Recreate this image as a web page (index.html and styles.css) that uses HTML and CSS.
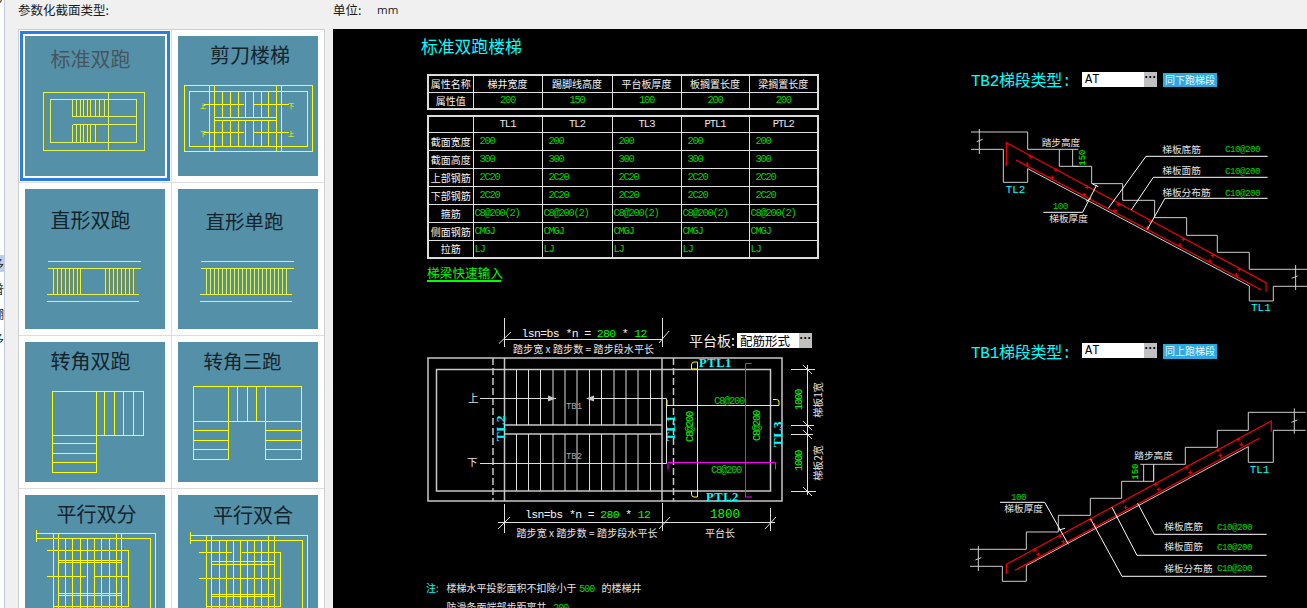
FILE: index.html
```html
<!DOCTYPE html>
<html lang="zh-CN">
<head>
<meta charset="utf-8">
<title>参数化截面类型</title>
<link rel="stylesheet" href="styles.css">
</head>
<body>
<div class="app">
  <aside class="tree">
    <div class="tree-item tree-first">号</div>
    <div class="tree-item tree-sel">多</div>
    <div class="tree-item">普</div>
    <div class="tree-item">翻</div>
    <div class="tree-item">多</div>
  </aside>
  <main class="panel">
    <header class="topbar">
      <span class="type-label">参数化截面类型:</span>
      <span class="unit-label">单位:</span>
      <span class="unit-value">mm</span>
    </header>
    <div class="body-row">
      <section class="gallery">
        <div class="cell cell-sel">
          <svg class="thumb" viewBox="0 0 140 140" width="140" height="140">
            <text class="thumb-title thumb-faded" x="25.5" y="31">标准双跑</text>
            <path class="ln halo" d="M18.5 56.5H119.5V114.5H18.5ZM25.5 63.5H111.5V106.5H25.5ZM83.5 56.5V114.5M47.5 63.5V80.5M51.5 63.5V80.5M55.5 63.5V80.5M58.5 63.5V80.5M62.5 63.5V80.5M65.5 63.5V80.5M70.5 63.5V80.5M74.5 63.5V80.5M79.5 63.5V80.5M47.5 80.5H111.5M47.5 88.5H111.5M47.5 88.5V106.5M51.5 88.5V106.5M55.5 88.5V106.5M58.5 88.5V106.5M62.5 88.5V106.5M65.5 88.5V106.5M70.5 88.5V106.5"/>
          </svg>
        </div>
        <div class="cell">
          <svg class="thumb" viewBox="0 0 140 140" width="140" height="140">
            <text class="thumb-title" x="32" y="27">剪刀楼梯</text>
            <path class="ln" d="M6.5 49.5H134.5V115.5H6.5ZM11.5 55.5H129.5V110.5H11.5ZM31.5 49.5V115.5M36.5 49.5V115.5M98.5 49.5V115.5M103.5 49.5V115.5M36.5 81.5H98.5M36.5 84.5H98.5M44.5 55.5V81.5M52.5 55.5V81.5M60.5 55.5V81.5M67.5 55.5V81.5M75.5 55.5V81.5M83.5 55.5V81.5M90.5 55.5V81.5M44.5 84.5V110.5M52.5 84.5V110.5M60.5 84.5V110.5M67.5 84.5V110.5M75.5 84.5V110.5M83.5 84.5V110.5M90.5 84.5V110.5M25.5 68.5H65.5M75.5 68.5H110.5M25.5 96.5H65.5M75.5 96.5H110.5"/>
            <text class="thumb-tiny" x="25" y="72">上</text>
            <text class="thumb-tiny" x="113" y="72">下</text>
            <text class="thumb-tiny" x="25" y="100">下</text>
            <text class="thumb-tiny" x="113" y="100">上</text>
          </svg>
        </div>
        <div class="cell">
          <svg class="thumb" viewBox="0 0 140 140" width="140" height="140">
            <text class="thumb-title" x="25.5" y="39">直形双跑</text>
            <path class="ln halo" d="M22.5 72.5H115.5M22.5 79.5H115.5M21.5 105.5H113.5M21.5 112.5H113.5M28.5 79.5V105.5M32.5 79.5V105.5M36.5 79.5V105.5M40.5 79.5V105.5M44.5 79.5V105.5M48.5 79.5V105.5M52.5 79.5V105.5M55.5 79.5V105.5M80.5 79.5V105.5M84.5 79.5V105.5M88.5 79.5V105.5M92.5 79.5V105.5M96.5 79.5V105.5M100.5 79.5V105.5M104.5 79.5V105.5M108.5 79.5V105.5"/>
          </svg>
        </div>
        <div class="cell">
          <svg class="thumb" viewBox="0 0 140 140" width="140" height="140">
            <text class="thumb-title thumb-sm" x="27.5" y="40">直形单跑</text>
            <path class="ln halo" d="M22.5 72.5H115.5M22.5 79.5H115.5M21.5 105.5H113.5M21.5 112.5H113.5M28.5 79.5V105.5M32.5 79.5V105.5M36.5 79.5V105.5M40.5 79.5V105.5M44.5 79.5V105.5M48.5 79.5V105.5M52.5 79.5V105.5M56.5 79.5V105.5M60.5 79.5V105.5M64.5 79.5V105.5M68.5 79.5V105.5M72.5 79.5V105.5M76.5 79.5V105.5M80.5 79.5V105.5M84.5 79.5V105.5M88.5 79.5V105.5M92.5 79.5V105.5M96.5 79.5V105.5M100.5 79.5V105.5M104.5 79.5V105.5M108.5 79.5V105.5"/>
          </svg>
        </div>
        <div class="cell">
          <svg class="thumb" viewBox="0 0 140 140" width="140" height="140">
            <text class="thumb-title" x="25.5" y="27">转角双跑</text>
            <path class="ln" d="M27.5 49.5H118.5V93.5H71.5V130.5H27.5ZM71.5 49.5V93.5M79.5 49.5V93.5M89.5 49.5V93.5M98.5 49.5V93.5M108.5 49.5V93.5M27.5 93.5H71.5M27.5 101.5H71.5M27.5 111.5H71.5M27.5 120.5H71.5"/>
          </svg>
        </div>
        <div class="cell">
          <svg class="thumb" viewBox="0 0 140 140" width="140" height="140">
            <text class="thumb-title thumb-sm" x="25.5" y="27">转角三跑</text>
            <path class="ln" d="M15.5 44.5H123.5V117.5H87.5V79.5H50.5V117.5H15.5ZM50.5 44.5V79.5M59.5 44.5V79.5M69.5 44.5V79.5M78.5 44.5V79.5M87.5 44.5V79.5M15.5 79.5H50.5M87.5 79.5H123.5M15.5 88.5H50.5M15.5 98.5H50.5M15.5 107.5H50.5M87.5 88.5H123.5M87.5 98.5H123.5M87.5 107.5H123.5"/>
          </svg>
        </div>
        <div class="cell">
          <svg class="thumb" viewBox="0 0 140 140" width="140" height="140">
            <text class="thumb-title" x="31.5" y="27">平行双分</text>
            <path class="ln" d="M11.5 38.5H130.5V140M11.5 43.5H125.5V140M11.5 35V47M28.5 38.5V140M33.5 38.5V140M91.5 38.5V140M96.5 38.5V140M21.5 55.5H103.5V111.5H28.5M33.5 65.5H95.5M33.5 67.5H95.5M21.5 81.5H60.5M69.5 81.5H103.5M33.5 98.5H95.5M33.5 100.5H95.5M40.5 43.5V140M47.5 43.5V140M55.5 43.5V140M62.5 43.5V140M69.5 43.5V140M76.5 43.5V140M84.5 43.5V140"/>
          </svg>
        </div>
        <div class="cell">
          <svg class="thumb" viewBox="0 0 140 140" width="140" height="140">
            <text class="thumb-title" x="35" y="28">平行双合</text>
            <path class="ln" d="M12.5 40.5H129.5V140M12.5 45.5H124.5V140M12.5 37V49M28.5 40.5V140M33.5 40.5V140M90.5 40.5V140M96.5 40.5V140M20.5 57.5H53.5M63.5 57.5H102.5V111.5H28.5M33.5 66.5H96.5M33.5 69.5H96.5M20.5 83.5H102.5M33.5 99.5H96.5M33.5 101.5H96.5M41.5 45.5V140M48.5 45.5V140M55.5 45.5V140M62.5 45.5V140M69.5 45.5V140M76.5 45.5V140M83.5 45.5V140"/>
          </svg>
        </div>
      </section>
      <section class="canvas">
        <svg class="drawing" viewBox="333 29 974 579" width="974" height="579">
          <text class="title" x="421" y="53">标准双跑楼梯</text>
          <text class="link" x="427" y="278" textLength="76">梯梁快速输入</text>
          <path class="link-rule" d="M427 281H501"/>

          <!-- stair plan -->
          <path class="wall" d="M428 358H782V501H428ZM436.5 369.5H770.5V491H436.5ZM504.5 358V501M662 358V501M504.5 425H662M504.5 434H662"/>
          <path class="wall-dash" d="M493 358V501M673.5 358V501"/>
          <path class="tread" d="M516.5 369.5V425M528.5 369.5V425M540.5 369.5V425M553 369.5V425M565 369.5V425M577 369.5V425M589.5 369.5V425M601.5 369.5V425M614 369.5V425M626 369.5V425M638 369.5V425M650.5 369.5V425M516.5 434V491M528.5 434V491M540.5 434V491M553 434V491M565 434V491M577 434V491M589.5 434V491M601.5 434V491M614 434V491M626 434V491M638 434V491M650.5 434V491M480 398.5H556M594 398.5H666.5V463.5H480"/>
          <path class="arrow" d="M548 395.500L556 398.500L548 401.500ZM594 395.500L586 398.500L594 401.500Z"/>
          <text class="lbl-12" x="468" y="402">上</text>
          <text class="lbl-12" x="467" y="466">下</text>
          <text class="tb" x="574" y="409">TB1</text>
          <text class="tb" x="574" y="459">TB2</text>
          <text class="tl-v" transform="rotate(-90 500 428)" x="500" y="428">TL2</text>
          <text class="tl-v" transform="rotate(-90 670 428)" x="670" y="428">TL1</text>
          <text class="tl-v" transform="rotate(-90 777 434)" x="777" y="434">TL3</text>
          <text class="ptl" x="699" y="367">PTL1</text>
          <text class="ptl" x="706" y="501">PTL2</text>
          <path class="rebar-y" d="M697.5 369H691.500V365Q691.500 362 694 362H697.500V497H694Q691.500 497 691.500 494V491M667 400V405.500H779V402Q779 399.500 776.500 399.500H773"/>
          <path class="rebar-m" d="M668 469.500V462.500H775.500V469.500M751.500 363.500H745.500V497H752"/>
          <text class="val" x="714" y="404">C8@200</text>
          <text class="val" x="711" y="473">C8@200</text>
          <text class="val-c" transform="rotate(-90 689.500 427)" x="689.500" y="427">C8@200</text>
          <text class="val-c" transform="rotate(-90 756.500 426)" x="756.500" y="426">C8@200</text>
          <path class="dim" d="M791 369.500H815M791 425.500H814M791 434.500H813M791 491.500H816M807.500 365V495M803 365L812 374M803 421L812 430M803 430L812 439M803 487L812 496"/>
          <text class="val-c" transform="rotate(-90 798.500 400)" x="798.500" y="400">1000</text>
          <text class="val-c" transform="rotate(-90 798.500 461)" x="798.500" y="461">1000</text>
          <text class="lbl-c" transform="rotate(-90 817 400)" x="817" y="400">梯板1宽</text>
          <text class="lbl-c" transform="rotate(-90 817 463)" x="817" y="463">梯板2宽</text>

          <path class="dim" d="M504.500 318V347M662.500 318V347M504.500 339.500H662.500M499 343.500L511 332M659 343L669 331M504.500 504V533M662.500 503V531M770.500 508V531M498 522.500H775M498 529L510 517M659 529L670 517M765 529L776 517"/>
          <text class="formula" x="521.500" y="337" textLength="126">lsn=bs *n = <tspan class="g">280</tspan> * <tspan class="g">12</tspan></text>
          <text class="lbl" x="513" y="353" textLength="141">踏步宽 x 踏步数 = 踏步段水平长</text>
          <text class="formula" x="525" y="518" textLength="126">lsn=bs *n = <tspan class="g">280</tspan> * <tspan class="g">12</tspan></text>
          <text class="lbl" x="516.500" y="537" textLength="141">踏步宽 x 踏步数 = 踏步段水平长</text>
          <text class="formula g" x="710" y="518">1800</text>
          <text class="lbl" x="705" y="537">平台长</text>
          <text class="lbl-14" x="689" y="345.500">平台板:</text>

          <text class="note-c" x="426" y="592">注:</text>
          <text class="lbl" x="446.500" y="592">楼梯水平投影面积不扣除小于</text>
          <text class="val-10" x="579" y="592">500</text>
          <text class="lbl" x="601.500" y="592">的楼梯井</text>
          <text class="lbl" x="446.500" y="611">防滑条面端部步距离共</text>
          <text class="val-10" x="553" y="611">200</text>

          <!-- TB2 section -->
          <g transform="translate(960 60) scale(.3333)">
            <text class="s-title" x="33" y="78" textLength="302">TB2梯段类型:</text>
            <path class="s-grey" d="M33 216H203V268H298V319H395V371H488V421H584V473H680V526H772V577H868V628H1041M33 268H130V367H203V326L868 678V723H940V679H1041M58 207V282M50 245L68 238M1007 615V690M995 655L1013 648M338 268V319H355M298 268H355"/>
            <path class="s-red" d="M139 318V248L918 668V695M168 300L905 690"/>
            <path class="s-red-x" d="M206 290h12M212 284v12M282 330h12M288 324v12M376 382h12M382 376v12M470 433h12M476 427v12M564 484h12M570 478v12M664 538h12M670 532v12M752 586h12M758 580v12M832 629h12M838 623v12M196 312h12M202 306v12M271 352h12M277 346v12M366 404h12M372 398v12M459 452h12M465 446v12M556 504h12M562 498v12M654 555h12M660 549v12M744 603h12M750 597v12M824 645h12M830 639v12"/>
            <path class="s-lead" d="M923 289H558L445 445M923 352H580L514 450M923 415H615L562 508M250 457H368L410 375M398 372L415 380M378 424L392 416"/>
            <text class="s-lbl" x="245" y="258">踏步高度</text>
            <text class="s-lbl" x="607" y="278">梯板底筋</text>
            <text class="s-lbl" x="607" y="342">梯板面筋</text>
            <text class="s-lbl" x="607" y="408">梯板分布筋</text>
            <text class="s-lbl" x="268" y="487">梯板厚度</text>
            <text class="s-val" x="795" y="275">C10@200</text>
            <text class="s-val" x="795" y="341">C10@200</text>
            <text class="s-val" x="795" y="407">C10@200</text>
            <text class="s-val" x="278" y="446">100</text>
            <text class="s-val-b" transform="rotate(-90 368 293)" x="368" y="293">150</text>
            <text class="s-tl" x="137" y="400">TL2</text>
            <text class="s-tl" x="873" y="754">TL1</text>
          </g>

          <!-- TB1 section -->
          <g transform="translate(960 335) scale(.3333)">
            <text class="s-title" x="33" y="68" textLength="302">TB1梯段类型:</text>
            <path class="s-grey" d="M30 643H199V591H295V541H391V490H485V439H581V388H676V337H772V286H865V232H1037M30 694H127V739H199V692L865 335V382H940V286H1037M55 633V708M46 675L64 668M1003 220V296M994 262L1012 255M581 388V439M551 388V439M541 388H581"/>
            <path class="s-red" d="M139 717V688L934 258V290M165 706L898 310"/>
            <path class="s-red-x" d="M219 645h12M225 639v12M294 604h12M300 598v12M386 553h12M392 547v12M484 500h12M490 494v12M581 448h12M587 442v12M674 397h12M680 391v12M768 346h12M774 340v12M829 313h12M835 307v12M229 658h12M235 652v12M304 620h12M310 614v12M397 570h12M403 564v12M491 517h12M497 511v12M590 463h12M596 457v12M685 412h12M691 406v12M775 361h12M781 355v12M838 328h12M844 322v12"/>
            <path class="s-lead" d="M920 598H583L533 505M920 661H531L456 517M920 724H486L392 552M120 502H254L325 628M297 585L315 580"/>
            <text class="s-lbl" x="523" y="371">踏步高度</text>
            <text class="s-lbl" x="613" y="585">梯板底筋</text>
            <text class="s-lbl" x="613" y="646">梯板面筋</text>
            <text class="s-lbl" x="613" y="711">梯板分布筋</text>
            <text class="s-lbl" x="133" y="531">梯板厚度</text>
            <text class="s-val" x="771" y="584">C10@200</text>
            <text class="s-val" x="771" y="646">C10@200</text>
            <text class="s-val" x="771" y="709">C10@200</text>
            <text class="s-val" x="153" y="495">100</text>
            <text class="s-val-b" transform="rotate(-90 528 410)" x="528" y="410">150</text>
            <text class="s-tl" x="869" y="415">TL1</text>
          </g>
        </svg>

        <div class="cad-input input-plate"><span class="cad-value cad-cjk">配筋形式</span><span class="cad-more">···</span></div>
        <div class="cad-input input-tb2"><span class="cad-value">AT</span><span class="cad-more">···</span></div>
        <div class="cad-input input-tb1"><span class="cad-value">AT</span><span class="cad-more">···</span></div>
        <div class="cad-btn btn-tb2">同下跑梯段</div>
        <div class="cad-btn btn-tb1">同上跑梯段</div>

        <table class="cad-table table-props">
          <colgroup><col class="c0"><col class="c1"><col class="c2"><col class="c3"><col class="c4"><col class="c5"></colgroup>
          <tr><th>属性名称</th><th>梯井宽度</th><th>踢脚线高度</th><th>平台板厚度</th><th>板搁置长度</th><th>梁搁置长度</th></tr>
          <tr><th>属性值</th><td class="mid">200</td><td class="mid">150</td><td class="mid">100</td><td class="mid">200</td><td class="mid">200</td></tr>
        </table>

        <table class="cad-table table-beams">
          <colgroup><col class="c0"><col class="c1"><col class="c2"><col class="c3"><col class="c4"><col class="c5"></colgroup>
          <tr class="head"><th></th><th class="tl">TL1</th><th class="tl">TL2</th><th class="tl">TL3</th><th class="tl">PTL1</th><th class="tl">PTL2</th></tr>
          <tr><th>截面宽度</th><td class="pad">200</td><td class="pad">200</td><td class="pad">200</td><td class="pad">200</td><td class="pad">200</td></tr>
          <tr><th>截面高度</th><td class="pad">300</td><td class="pad">300</td><td class="pad">300</td><td class="pad">300</td><td class="pad">300</td></tr>
          <tr><th>上部钢筋</th><td class="pad">2C20</td><td class="pad">2C20</td><td class="pad">2C20</td><td class="pad">2C20</td><td class="pad">2C20</td></tr>
          <tr><th>下部钢筋</th><td class="pad">2C20</td><td class="pad">2C20</td><td class="pad">2C20</td><td class="pad">2C20</td><td class="pad">2C20</td></tr>
          <tr><th>箍筋</th><td>C8@200(2)</td><td>C8@200(2)</td><td>C8@200(2)</td><td>C8@200(2)</td><td>C8@200(2)</td></tr>
          <tr><th>侧面钢筋</th><td>CMGJ</td><td>CMGJ</td><td>CMGJ</td><td>CMGJ</td><td>CMGJ</td></tr>
          <tr><th>拉筋</th><td>LJ</td><td>LJ</td><td>LJ</td><td>LJ</td><td>LJ</td></tr>
        </table>
      </section>
    </div>
  </main>
</div>
</body>
</html>
```
FILE: styles.css
```css
* { box-sizing: border-box; }
html, body { margin: 0; height: 100%; overflow: hidden; background: #f0f0f0; }
body { font-family: "Noto Sans CJK SC", "Liberation Sans", sans-serif; color: #1a1a1a; }
.app { display: flex; width: 1307px; height: 608px; overflow: hidden; }

/* clipped tree on the far left */
.tree { width: 5px; flex: none; background: #fff; border-right: 1px solid #c3cbd6; overflow: hidden; padding-top: 0; }
.tree-item { height: 17px; width: 4px; margin-bottom: 8px; font-size: 12px; line-height: 17px; white-space: nowrap; text-indent: -8px; overflow: hidden; color: #222; }
.tree-first { margin-top: -12px; margin-bottom: 250px; }
.tree-sel { background: #b9cfec; }

.panel { flex: 1; min-width: 0; display: flex; flex-direction: column; padding-left: 13px; }
.topbar { height: 29px; flex: none; display: flex; align-items: flex-start; font-size: 12.500px; line-height: 19px; }
.type-label { width: 315px; }
.unit-label { width: 44px; }
.unit-value { font-family: "Open Sans", "Liberation Sans", sans-serif; font-size: 11.500px; }

.body-row { flex: 1; display: flex; min-height: 0; }

/* gallery of stair types */
.gallery { width: 307px; flex: none; margin-right: 8px; display: grid; grid-template-columns: 152px 152px; grid-auto-rows: 152px; gap: 1px; background: #dcdcdc; border: 1px solid #cfcfcf; border-bottom: 0; align-content: start; height: 700px; }
.cell { background: #fff; padding: 6px 0 0 6px; }
.cell-sel { box-shadow: inset 0 0 0 1px #fff, inset 0 0 0 4px #2b7ee0; }
.thumb { display: block; background: #5590a9; }
.thumb-title { font-size: 20px; fill: #13242c; }
.thumb-faded { fill: #46555c; }
.thumb-sm { font-size: 19.5px; }
.thumb-tiny { font-size: 6px; fill: #ffff00; text-anchor: middle; }
.ln { fill: none; stroke: #ffff00; stroke-width: 1; shape-rendering: crispEdges; }
.halo { stroke: #e6f54e; filter: drop-shadow(1px 0 0 #7f8f22); }

/* CAD canvas */
.canvas { position: relative; flex: 1; background: #000; overflow: hidden; }
.drawing { display: block; }
.drawing text { font-family: "Noto Sans CJK SC", "Liberation Mono", monospace; }
.title { font-size: 16.800px; fill: #00ffff; }
.link { font-size: 12.500px; fill: #00ff00; }
.link-rule { stroke: #00ff00; stroke-width: 2; }
.wall { fill: none; stroke: #c8c8c8; stroke-width: 1.500; }
.wall-dash { fill: none; stroke: #c8c8c8; stroke-width: 1.500; stroke-dasharray: 7 3; }
.tread { fill: none; stroke: #dcdcdc; stroke-width: 1; }
.arrow { fill: #c8c8c8; }
.dim { fill: none; stroke: #e0e0e0; stroke-width: 1; }
.rebar-y { fill: none; stroke: #ffff00; stroke-width: 1; }
.rebar-m { fill: none; stroke: #ff00ff; stroke-width: 1; }
.lbl, .lbl-c { font-size: 10px; fill: #e4e4e4; }
.lbl-c { text-anchor: middle; dominant-baseline: central; }
.lbl-12 { font-size: 10.500px; fill: #e4e4e4; }
.lbl-14 { font-size: 14px; fill: #f0f0f0; }
.drawing .tb { font-family: "Liberation Mono", monospace; font-size: 9px; fill: #a8a8a8; text-anchor: middle; }
.drawing .tl-v { font-family: "Liberation Serif", serif; font-weight: 700; font-size: 13.500px; fill: #00ffff; text-anchor: middle; dominant-baseline: central; letter-spacing: .5px; }
.drawing .ptl { font-family: "Liberation Serif", serif; font-weight: 700; font-size: 12.500px; fill: #00ffff; letter-spacing: .6px; }
.drawing .val, .drawing .val-c, .drawing .val-10 { font-family: "Liberation Mono", monospace; font-size: 10.500px; letter-spacing: -1.300px; fill: #00d800; }
.drawing .val-c { text-anchor: middle; dominant-baseline: central; fill: #00ff00; }
.drawing .formula { font-family: "Liberation Mono", monospace; font-size: 11.500px; fill: #f4f4f4; }
.drawing .formula.g { fill: #00ff00; font-size: 12.500px; }
.g { fill: #00ff00; }
.note-c { font-size: 10px; fill: #00ffff; }

.drawing .s-title { font-family: "Liberation Mono", "Noto Sans CJK SC", monospace; font-size: 48px; fill: #00ffff; }
.s-grey { fill: none; stroke: #cfcfcf; stroke-width: 3; }
.s-red { fill: none; stroke: #ff0000; stroke-width: 3.500; }
.s-red-x { fill: none; stroke: #ff0000; stroke-width: 3; }
.s-lead { fill: none; stroke: #ffffff; stroke-width: 3; }
.s-lbl { font-size: 29px; fill: #e4e4e4; }
.drawing .s-val { font-family: "Liberation Mono", monospace; font-size: 28px; letter-spacing: -1.800px; fill: #00d800; }
.drawing .s-val-b { font-family: "Liberation Mono", monospace; font-size: 27px; fill: #00ff00; text-anchor: middle; dominant-baseline: central; }
.drawing .s-tl { font-family: "Liberation Mono", monospace; font-size: 33px; fill: #00ffff; }

/* overlays on the drawing */
.cad-input { position: absolute; display: flex; justify-content: space-between; height: 15px; background: #fff; color: #000; }
.cad-value { font-family: "Liberation Mono", monospace; font-size: 12px; line-height: 17px; padding-left: 3px; }
.cad-cjk { font-family: "Noto Sans CJK SC", sans-serif; font-size: 12.500px; line-height: 15px; }
.cad-more { width: 13px; background: #c0c0c0; font-family: "Liberation Sans", sans-serif; font-weight: 700; font-size: 12px; line-height: 10px; text-align: center; color: #000; }
.input-plate { left: 404px; top: 304px; width: 75px; }
.input-tb2 { left: 749px; top: 43px; width: 75px; }
.input-tb1 { left: 749px; top: 314px; width: 75px; }
.cad-btn { position: absolute; width: 54px; height: 14px; background: #29abe2; color: #e8f7ff; font-size: 10px; line-height: 14px; text-align: center; white-space: nowrap; }
.btn-tb2 { left: 830px; top: 44px; }
.btn-tb1 { left: 830px; top: 315px; height: 15px; }

.cad-table { position: absolute; left: 94px; width: 390px; table-layout: fixed; border-collapse: collapse; border: 2px solid #dcdcdc; color: #fff; }
.table-props { top: 45px; }
.table-beams { top: 86px; }
.cad-table th, .cad-table td { border: 1px solid #e0e0e0; padding: 0; white-space: nowrap; overflow: hidden; }
.cad-table th { font-weight: 400; font-size: 10px; text-align: center; color: #f4f4f4; }
.cad-table td { font-family: "Liberation Mono", monospace; font-size: 10.500px; letter-spacing: -1.300px; color: #00d800; padding-left: 1px; }
.cad-table td.mid { text-align: center; padding-left: 0; }
.cad-table td.pad { padding-left: 6px; }
.cad-table th.tl { font-family: "Liberation Mono", monospace; font-size: 10.500px; letter-spacing: -1px; color: #e8e8e8; }
.table-props tr { height: 17px; }
.table-beams tr { height: 18px; }
.table-beams tr.head { height: 16px; }
.c0 { width: 45px; }
.c1 { width: 69px; }
.c2 { width: 70px; }
.c3 { width: 69px; }
.c4 { width: 68px; }
.c5 { width: 69px; }
```
